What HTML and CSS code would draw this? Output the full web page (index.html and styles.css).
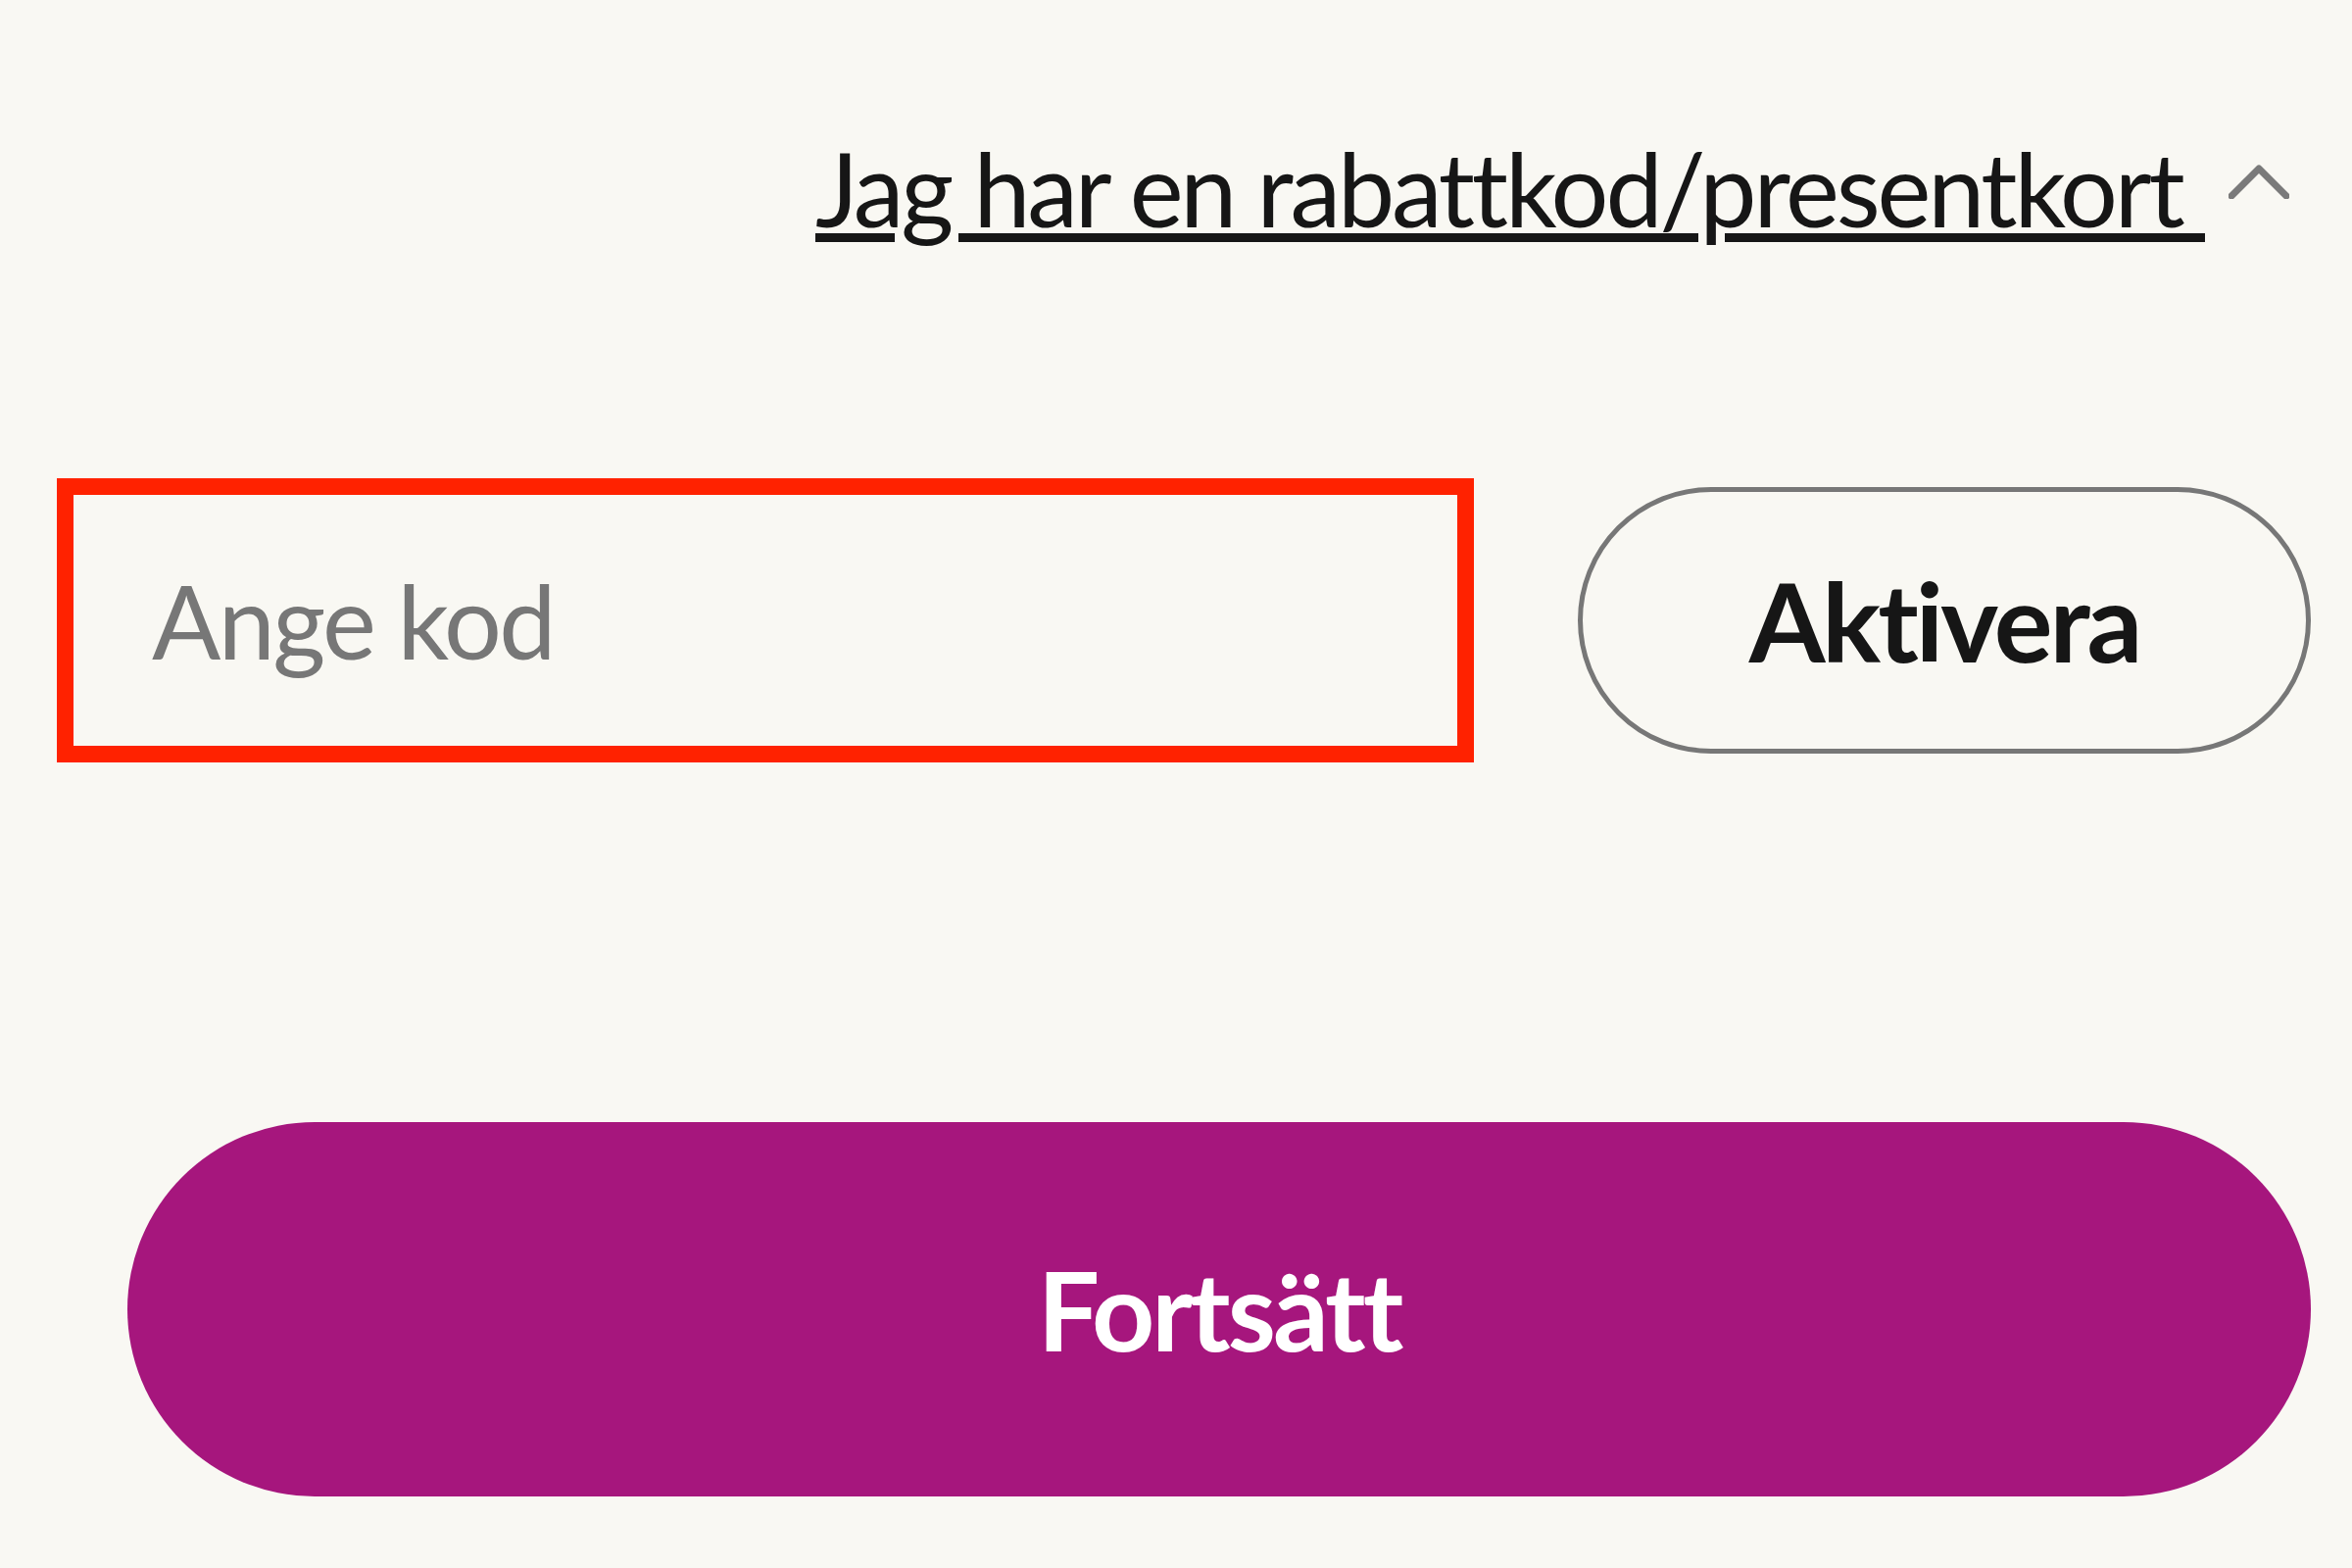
FILE: index.html
```html
<!DOCTYPE html>

<html>

<head>
	<title>Kassa</title>
	<link rel="stylesheet" href="styles.css">
</head>

<body>
	<div class="checkout">
		<div class="code-toggle">
			<a href="#" class="code-link">Jag har en rabattkod/presentkort&nbsp;</a>
			<svg class="chevron" viewBox="0 0 62 35">
				<polyline points="3,32 31,4 59,32" />
			</svg>
		</div>
		<form class="code-form">
			<input type="text" class="code-input" placeholder="Ange kod" />
			<button type="button" class="btn-outline">Aktivera</button>
		</form>
		<button type="button" class="btn-primary">Fortsätt</button>
	</div>
</body>

</html>
```
FILE: styles.css
```css
body {
	margin: 0;
	background: #f9f8f3;
	color: #161616;
	font-family: Lato, "Open Sans", sans-serif;
}

.checkout {
	display: flex;
	flex-direction: column;
	padding: 130px 42px 0 58px;
}

.code-toggle {
	display: flex;
	justify-content: flex-end;
	align-items: flex-start;
	gap: 24px;
	padding-right: 22px;
}

.code-link {
	font-size: 104px;
	line-height: 1.2;
	letter-spacing: -3.2px;
	color: #161616;
	text-decoration: underline;
	text-decoration-thickness: 9px;
	text-underline-offset: 6px;
}

.chevron {
	width: 62px;
	height: 35px;
	margin-top: 38px;
	fill: none;
	stroke: #7a7a7a;
	stroke-width: 7;
	stroke-linecap: round;
	stroke-linejoin: round;
}

.code-form {
	display: flex;
	align-items: center;
	gap: 106px;
	margin: 233px 0 0;
}

.code-input {
	box-sizing: border-box;
	width: 1446px;
	height: 290px;
	border: 17px solid #ff2200;
	background: transparent;
	padding: 0 0 0 80px;
	font-family: inherit;
	font-size: 104px;
	letter-spacing: -2.5px;
	color: #161616;
	outline: none;
}

.code-input::placeholder {
	color: #777;
	opacity: 1;
}

.btn-outline {
	box-sizing: border-box;
	flex: 1;
	height: 272px;
	border: 5px solid #777;
	border-radius: 136px;
	background: transparent;
	font-family: inherit;
	font-size: 112px;
	font-weight: 700;
	letter-spacing: -3px;
	color: #161616;
}

.btn-primary {
	margin: 367px 0 0 72px;
	height: 382px;
	border: 0;
	border-radius: 191px;
	background: #a6167d;
	color: #fff;
	font-family: inherit;
	font-size: 112px;
	font-weight: 700;
	letter-spacing: -3px;
}
```
